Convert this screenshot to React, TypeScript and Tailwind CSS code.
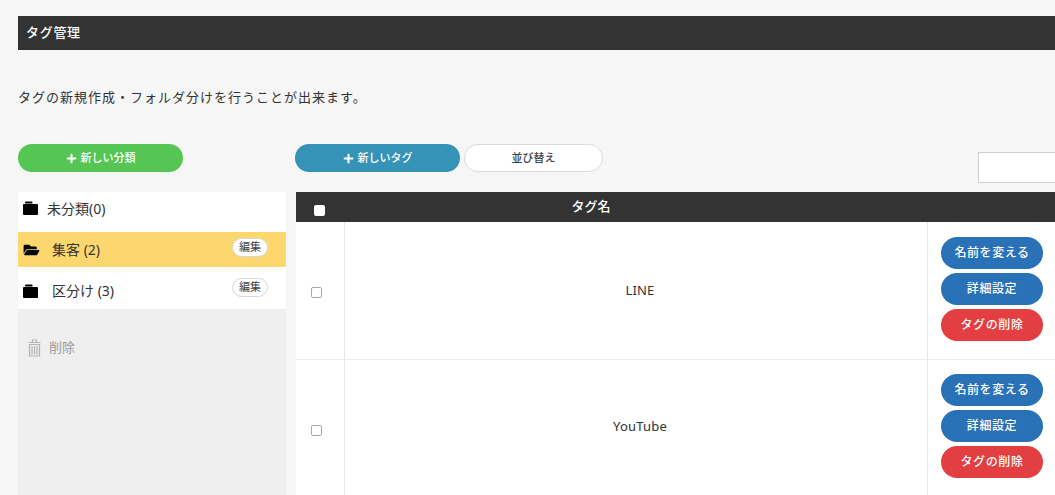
import React from 'react';
import { FaFolderOpen, FaPlus } from 'react-icons/fa';

const font = "font-['Noto_Sans','Noto_Sans_CJK_JP',sans-serif]";

const FolderIcon = () => (
  <svg width="15" height="14" viewBox="0 0 15 14" fill="#000" className="shrink-0">
    <path d="M3 0.5h5.5a1 1 0 0 1 1 1v1h-7.5v-1a1 1 0 0 1 1-1z" />
    <path d="M1 3h13a1 1 0 0 1 1 1v9a1 1 0 0 1-1 1h-13a1 1 0 0 1-1-1v-9a1 1 0 0 1 1-1z" />
  </svg>
);

const TrashIcon = () => (
  <svg width="13" height="18" viewBox="0 0 13 18" fill="none" stroke="#b4b4b4" strokeWidth="1.2" className="shrink-0">
    <path d="M0.5 3.5h12M4.5 3.5v-2.5h4v2.5" />
    <path d="M1.5 5.5h10v11.5h-10z" />
    <path d="M4 7v8.5M6.5 7v8.5M9 7v8.5" />
  </svg>
);

const EditPill = () => (
  <span className="flex h-[19px] w-[36px] items-center justify-center rounded-full border border-[#d8d8d8] bg-white text-[11px] text-[#444]">
    編集
  </span>
);

const RowActions = () => (
  <div className="flex flex-col gap-1">
    <button className="h-8 w-[102px] rounded-full bg-[#2a72b8] text-[12px] font-medium tracking-[0.6px] text-white">名前を変える</button>
    <button className="h-8 w-[102px] rounded-full bg-[#2a72b8] text-[12px] font-medium tracking-[0.6px] text-white">詳細設定</button>
    <button className="h-8 w-[102px] rounded-full bg-[#e33f42] text-[12px] font-medium tracking-[0.6px] text-white">タグの削除</button>
  </div>
);

const TagRow = ({ name, actionsClass, textClass }: { name: string; actionsClass: string; textClass: string }) => (
  <div className="flex h-[138px] border-b border-[#ececec] bg-white">
    <div className="flex w-[49px] shrink-0 items-center justify-center border-r border-[#e6e6e6] pr-2 pt-[3px]">
      <span className="h-[11px] w-[11px] rounded-[2px] border border-[#a8a8a8] bg-white" />
    </div>
    <div className={`flex w-[583px] shrink-0 items-center justify-center border-r border-[#e6e6e6] pl-[8px] text-[13px] tracking-[0.2px] text-[#333] ${textClass}`}>
      {name}
    </div>
    <div className={`flex-1 pl-[13px] ${actionsClass}`}>
      <RowActions />
    </div>
  </div>
);

export default function App() {
  return (
    <div className={`h-[495px] w-[1055px] overflow-hidden bg-[#f6f6f6] pl-[18px] pt-[16px] ${font}`}>
      <div className="flex h-[34px] items-center bg-[#333333] pl-2 text-[13px] font-medium tracking-[0.7px] text-white">タグ管理</div>

      <p className="mt-[37px] text-[13px] leading-[20px] tracking-[1px] text-[#333]">
        タグの新規作成・フォルダ分けを行うことが出来ます。
      </p>

      <div className="mt-[37px] flex h-[39px] items-start">
        <button className="flex h-7 w-[165px] shrink-0 items-center justify-center gap-1 rounded-full bg-[#55c653] text-[11px] font-medium text-white">
          <FaPlus className="h-[11px] w-[11px]" />
          新しい分類
        </button>
        <button className="ml-[112px] flex h-7 w-[165px] shrink-0 items-center justify-center gap-1 rounded-full bg-[#3593b8] text-[11px] font-medium text-white">
          <FaPlus className="h-[11px] w-[11px]" />
          新しいタグ
        </button>
        <button className="ml-[4px] h-7 w-[139px] shrink-0 rounded-full border border-[#dcdcdc] bg-white text-[11px] font-medium text-[#444]">
          並び替え
        </button>
        <div className="ml-[375px] mt-2 h-[31px] w-[90px] shrink-0 border border-[#cfcfcf] bg-white" />
      </div>

      <div className="mt-[9px] flex">
        <aside className="h-[303px] w-[268px] shrink-0 bg-[#efefef]">
          <div className="flex h-[40px] items-center bg-white pb-[8px] pl-[5px] text-[14px] text-[#333]">
            <FolderIcon />
            <span className="ml-[9px]">未分類(0)</span>
          </div>
          <div className="flex h-[35px] items-center justify-between bg-[#fbd76e] pl-[5px] pr-[18px] text-[14px] text-[#333]">
            <div className="flex items-center">
              <FaFolderOpen className="h-[14px] w-[17px] text-black" />
              <span className="ml-[12px]">集客 (2)</span>
            </div>
            <span className="mb-[5px]"><EditPill /></span>
          </div>
          <div className="flex h-[42px] items-center justify-between bg-white pl-[5px] pr-[18px] text-[14px] text-[#333]">
            <div className="flex items-center pt-[5px]">
              <FolderIcon />
              <span className="ml-[14px]">区分け (3)</span>
            </div>
            <span className="mb-[2px]"><EditPill /></span>
          </div>
          <div className="mt-[29px] flex items-center pl-[10px] text-[13px] text-[#9a9a9a]">
            <TrashIcon />
            <span className="ml-[8px]">削除</span>
          </div>
        </aside>

        <section className="ml-[10px] h-[303px] w-[800px] shrink-0 overflow-hidden bg-white">
          <div className="flex h-[30px] bg-[#333333] text-[13px] font-medium text-white">
            <div className="flex w-[49px] shrink-0 items-center justify-center pr-[2px] pt-[6px]">
              <span className="h-[11px] w-[11px] rounded-[2px] bg-white" />
            </div>
            <div className="flex w-[492px] shrink-0 items-center justify-center">
              タグ名
            </div>
          </div>
          <TagRow name="LINE" actionsClass="pt-[15px]" textClass="" />
          <TagRow name="YouTube" actionsClass="pt-[14px]" textClass="pb-[3px]" />
        </section>
      </div>
    </div>
  );
}
